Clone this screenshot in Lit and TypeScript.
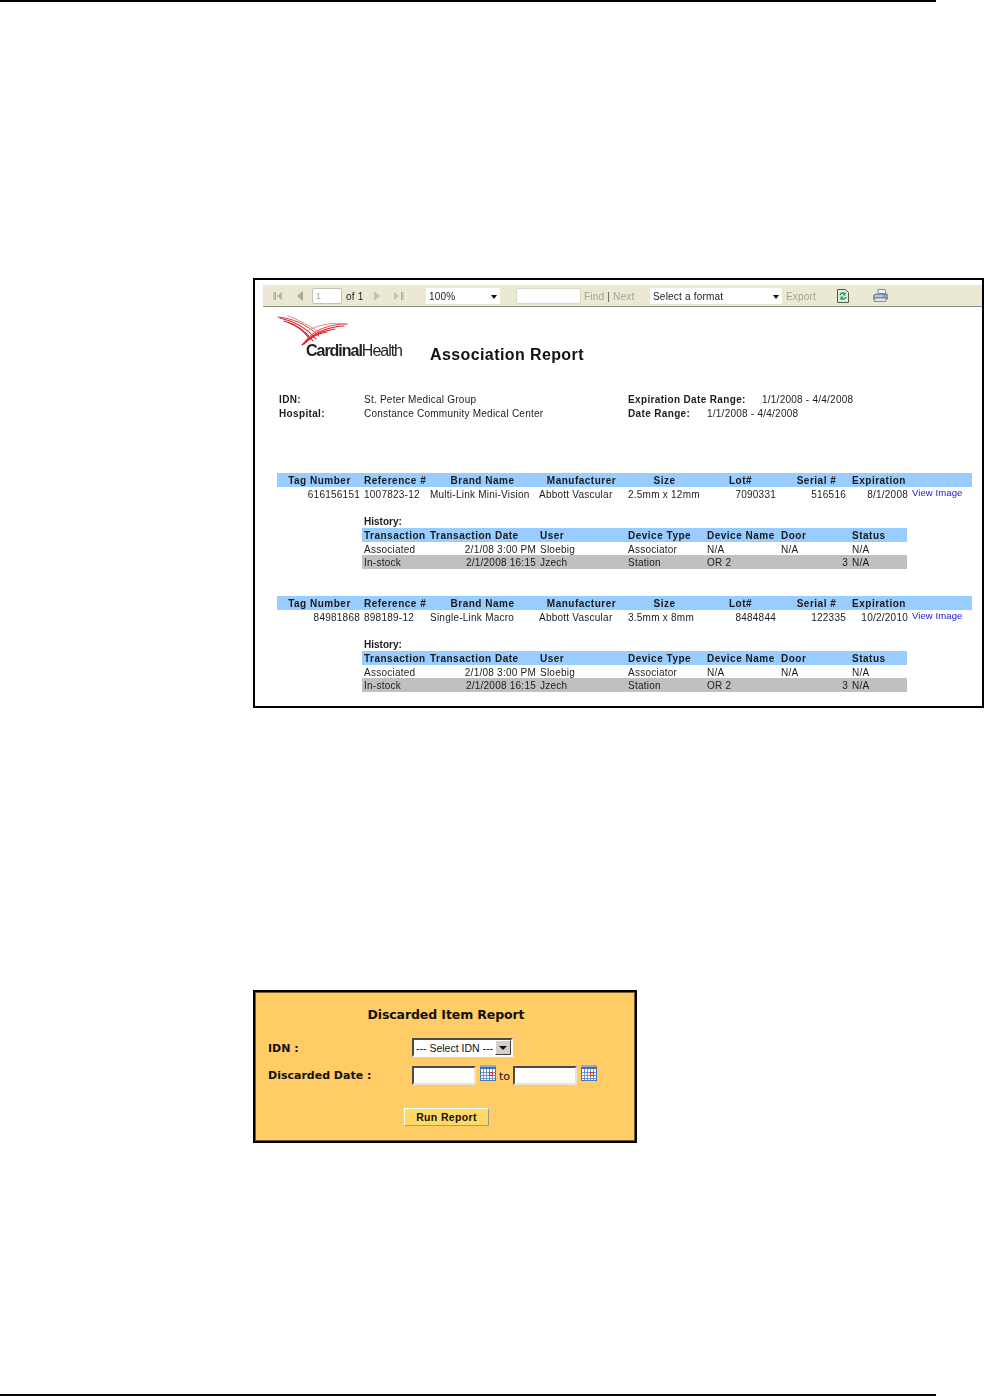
import { LitElement, html, css, svg } from "lit";
import { customElement } from "lit/decorators.js";

const mainHead = ["Tag Number", "Reference #", "Brand Name", "Manufacturer", "Size", "Lot#", "Serial #", "Expiration", ""];
const histHead = ["Transaction", "Transaction Date", "User", "Device Type", "Device Name", "Door", "Status"];

const records = [
  { main: ["616156151", "1007823-12", "Multi-Link Mini-Vision", "Abbott Vascular", "2.5mm x 12mm", "7090331", "516516", "8/1/2008"] },
  { main: ["84981868", "898189-12", "Single-Link Macro", "Abbott Vascular", "3.5mm x 8mm", "8484844", "122335", "10/2/2010"] },
];

const calendar = svg`<svg class="cal" viewBox="0 0 16 16" width="16" height="16">
  <rect x="0.5" y="0.5" width="15" height="15" fill="#fff" stroke="#3f6fb5"/>
  <rect x="0" y="0" width="16" height="4" fill="#3f6fb5"/>
  <path d="M1 0v2M3 0v2M5 0v2M7 0v2M9 0v2M11 0v2M13 0v2M15 0v2" stroke="#dfe8f5" stroke-width="1"/>
  <path d="M0.5 7.5h15M0.5 10.5h15M0.5 13.5h15M3.5 4v12M6.5 4v12M9.5 4v12M12.5 4v12" stroke="#6d94cf" stroke-width="1"/>
  <rect x="9.5" y="7.5" width="3" height="3" fill="#fff" stroke="#e8231a"/>
</svg>`;

@customElement("app-root")
export class AppRoot extends LitElement {
  static styles = css`
    :host { display: block; background: #fff; font-family: "Liberation Sans", Arial, sans-serif; color: #1c1c1c; }
    .page { height: 1396px; display: flex; flex-direction: column; overflow: hidden; }
    .rule { width: 936px; height: 2px; background: #000; flex: none; }
    .spacer { flex: 1; }

    .frame { margin: 276px 0 0 253px; width: 731px; height: 430px; box-sizing: border-box; border: 2px solid #000; padding-top: 5px; flex: none; overflow: hidden; }
    .toolbar { margin-left: 8px; height: 22px; box-sizing: border-box; background: #ebe9d4; border-bottom: 1px solid #8f8f80; display: flex; align-items: center; font-size: 10px; letter-spacing: .2px; color: #a3a394; line-height: 16px; filter: blur(.3px); }
    .toolbar svg { display: block; flex: none; }
    .nav1 { margin-left: 10px; }
    .nav2 { margin-left: 14px; }
    .pageno { margin-left: 9px; width: 30px; height: 16px; box-sizing: border-box; background: #fff; border: 1px solid #c4c4b4; border-radius: 2px; padding-left: 3px; line-height: 15px; color: #a8a8a8; font-size: 9px; }
    .of { margin-left: 4px; color: #222; width: 19px; white-space: nowrap; padding-top: 2px; }
    .nav3 { margin-left: 9px; }
    .nav4 { margin-left: 14px; }
    .zoomsel { margin-left: 22px; width: 74px; height: 16px; background: #fff; color: #222; box-sizing: border-box; padding: 2px 3px 0; display: flex; align-items: center; justify-content: space-between; }
    .findbox { margin-left: 16px; width: 65px; height: 16px; background: #fff; border: 1px solid #d8d8c8; box-sizing: border-box; border-radius: 2px; }
    .find { margin-left: 3px; width: 50px; flex: none; white-space: nowrap; padding-top: 2px; }
    .sep { margin: 0 3px; color: #555; }
    .fmtsel { margin-left: 16px; width: 132px; height: 16px; background: #fff; color: #222; box-sizing: border-box; padding: 2px 3px 0; display: flex; align-items: center; justify-content: space-between; }
    .export { margin-left: 4px; width: 30px; white-space: nowrap; padding-top: 2px; }
    .refresh { margin-left: 21px; }
    .print { margin-left: 24px; }
    .tri { width: 0; height: 0; border-left: 3px solid transparent; border-right: 3px solid transparent; border-top: 4px solid #111; }

    .body { padding-left: 22px; font-size: 10px; letter-spacing: .24px; line-height: 14px; filter: blur(.3px); }
    .brandrow { height: 85px; display: flex; align-items: flex-start; }
    .logo { width: 153px; padding-top: 8px; flex: none; }
    .logo svg { display: block; }
    .wordmark { font-size: 16px; line-height: 14px; letter-spacing: -1.02px; color: #222; margin: -3px 0 0 29px; white-space: nowrap; }
    .wordmark b { font-weight: bold; }
    .title { font-size: 16px; font-weight: bold; letter-spacing: .4px; color: #111; margin-top: 39px; line-height: 18px; white-space: nowrap; }

    .meta { display: grid; grid-template-columns: 85px 264px 1fr; grid-auto-rows: 14px; align-content: start; padding: 1px 0 0 2px; height: 81px; box-sizing: border-box; }
    .meta b { letter-spacing: .35px; }
    .meta .pair { display: flex; }
    .lab1 { width: 134px; flex: none; }
    .lab2 { width: 79px; flex: none; }

    .record { height: 123px; }
    .cols { display: grid; height: 14px; line-height: 14px; white-space: nowrap; }
    .main { grid-template-columns: 85px 66px 109px 89px 77px 75px 70px 62px 62px; width: 695px; }
    .hist { grid-template-columns: 66px 110px 88px 79px 74px 71px 57px; width: 545px; margin-left: 85px; }
    .cols > div { padding: 1px 2px 0; box-sizing: border-box; overflow: visible; }
    .headrow { background: #99ccff; font-weight: bold; color: #1a1a1a; letter-spacing: .5px; }
    .main.headrow > div { text-align: center; }
    .main.headrow > div:nth-child(7) { padding-left: 9px; }
    .r { text-align: right; }
    .cols > .view { color: #1414e0; font-size: 9.5px; letter-spacing: .1px; position: relative; top: -2px; padding-left: 2px; }
    .historylabel { margin: 14px 0 0 87px; height: 13px; line-height: 13px; font-weight: bold; letter-spacing: 0; }
    .h13 { height: 13px; line-height: 13px; }
    .grey { background: #c0c0c0; height: 14px; line-height: 13px; }

    .form { margin: 282px 0 0 253px; width: 384px; height: 153px; box-sizing: border-box; border: 2px solid #000; box-shadow: inset 0 0 0 1px rgba(0, 0, 0, .55); background: #ffcc66; flex: none; font-family: "DejaVu Sans", Verdana, sans-serif; color: #111; }
    .ftitle { margin-top: 15px; height: 16px; line-height: 16px; text-align: center; font-size: 12.5px; font-weight: bold; letter-spacing: -.1px; padding-left: 2px; }
    .frow { display: flex; align-items: center; margin-left: 13px; }
    .flabel { width: 144px; font-size: 11px; font-weight: bold; letter-spacing: 0; white-space: nowrap; flex: none; padding-top: 1px; }
    .r1 { margin-top: 15px; height: 19px; }
    .r2 { margin-top: 8px; height: 20px; }
    .sel { width: 101px; height: 19px; box-sizing: border-box; background: #fff; border: 2px solid; border-color: #4a4a4a #fff #fff #4a4a4a; display: flex; align-items: center; justify-content: space-between; font: 10.5px "Liberation Sans", Arial, sans-serif; letter-spacing: 0; padding: 0 0 0 2px; white-space: nowrap; color: #111; }
    .selbtn { width: 16px; height: 15px; background: #d4d0c8; border: 1px solid; border-color: #fff #404040 #404040 #fff; box-sizing: border-box; display: flex; align-items: center; justify-content: center; flex: none; }
    .selbtn .tri { border-left-width: 4px; border-right-width: 4px; border-top-width: 4px; }
    .inp { width: 64px; height: 19px; box-sizing: border-box; background: #fff; border: 2px solid; border-color: #4a4a4a #e8e4dc #e8e4dc #4a4a4a; flex: none; }
    .cal { margin-left: 4px; margin-top: -5px; flex: none; display: block; }
    .to { font: 11px "DejaVu Sans", Verdana, sans-serif; width: 11px; margin: 3px 3px 0 3px; flex: none; }
    .btnrow { margin: 23px 0 0 149px; }
    .btn { width: 85px; height: 18px; box-sizing: border-box; background: #ffd966; border: 1px solid; border-color: #fff #999 #999 #fff; font: bold 10.5px "Liberation Sans", Arial, sans-serif; letter-spacing: .35px; text-align: center; line-height: 16px; color: #111; }
  `;

  private logo() {
    return svg`<svg viewBox="0 0 72 32" width="72" height="32" fill="none" stroke="#d8202a" stroke-linecap="round">
      <path d="M1 2C14 3 30 9 42 21" stroke-width="1" stroke="#d8444c"/>
      <path d="M3 3C16 6 30 13 39 24" stroke-width="1.1"/>
      <path d="M7 6C18 9 28 15 36 26" stroke-width="1.1"/>
      <path d="M12 8C21 11 28 17 33 25" stroke-width="1.1"/>
      <path d="M11 1C20 4 35 12 45 19" stroke-width="1" stroke="#e58a8e"/>
      <path d="M70 9C52 9 35 15 27 28" stroke-width="1" stroke="#d8444c"/>
      <path d="M67 11C50 12 36 18 26 29" stroke-width="1.1"/>
      <path d="M58 14C44 16 34 21 25 30" stroke-width="1.1"/>
      <path d="M50 17C41 18 33 23 27 29" stroke-width="1.1"/>
      <path d="M70 9C58 7 44 9 32 15" stroke-width="1" stroke="#e58a8e"/>
    </svg>`;
  }

  private first() {
    return svg`<svg class="nav1" viewBox="0 0 10 10" width="10" height="10"><path d="M1 1v8M2.5 1v8" stroke="#a9a99a"/><path d="M9 1v8L4 5z" fill="#b4b4a5"/></svg>`;
  }
  private prev() {
    return svg`<svg class="nav2" viewBox="0 0 6 10" width="6" height="10"><path d="M6 0v10L0 5z" fill="#a9a99a"/></svg>`;
  }
  private next() {
    return svg`<svg class="nav3" viewBox="0 0 6 10" width="6" height="10"><path d="M0 0v10l6-5z" fill="#c4c4b5"/></svg>`;
  }
  private last() {
    return svg`<svg class="nav4" viewBox="0 0 10 10" width="10" height="10"><path d="M0 1v8l5-4z" fill="#c4c4b5"/><path d="M7.5 1v8M9 1v8" stroke="#a9a99a"/></svg>`;
  }
  private refresh() {
    return svg`<svg class="refresh" viewBox="0 0 12 14" width="12" height="14">
      <path d="M.5.5h8l3 3v10H.5z" fill="#e4ebe6" stroke="#4e5c54"/>
      <path d="M3 6a3 3 0 0 1 5-1M9 8a3 3 0 0 1-5 1" fill="none" stroke="#1fa34a" stroke-width="1.6"/>
      <path d="M8.5 2.5v4h-3zM3.5 11.5v-4h3z" fill="#1fa34a"/>
    </svg>`;
  }
  private printer() {
    return svg`<svg class="print" viewBox="0 0 15 13" width="15" height="13">
      <path d="M5 .5h7l1 4H5z" fill="#f4f6f9" stroke="#7c8a9c"/>
      <path d="M2 5h12l1 1v4H0V7z" fill="#8d9fb6" stroke="#5e6c80" stroke-width=".6"/>
      <path d="M2 9h11v3.5H1z" fill="#dfe5ec" stroke="#5e6c80" stroke-width=".7"/>
      <path d="M2 7h8" stroke="#e6ebf2"/>
    </svg>`;
  }

  private record(r: { main: string[] }) {
    const m = r.main;
    return html`<div class="record">
      <div class="cols main headrow">${mainHead.map((h) => html`<div>${h}</div>`)}</div>
      <div class="cols main">
        <div class="r">${m[0]}</div><div>${m[1]}</div><div>${m[2]}</div><div>${m[3]}</div><div>${m[4]}</div>
        <div class="r">${m[5]}</div><div class="r">${m[6]}</div><div class="r">${m[7]}</div>
        <div class="view">View Image</div>
      </div>
      <div class="historylabel">History:</div>
      <div class="cols hist headrow">${histHead.map((h) => html`<div>${h}</div>`)}</div>
      <div class="cols hist h13">
        <div>Associated</div><div class="r">2/1/08 3:00 PM</div><div>Sloebig</div><div>Associator</div><div>N/A</div><div>N/A</div><div>N/A</div>
      </div>
      <div class="cols hist grey">
        <div>In-stock</div><div class="r">2/1/2008 16:15</div><div>Jzech</div><div>Station</div><div>OR 2</div><div class="r">3</div><div>N/A</div>
      </div>
    </div>`;
  }

  render() {
    return html`<div class="page">
      <div class="rule"></div>
      <section class="frame">
        <div class="toolbar">
          ${this.first()}${this.prev()}
          <div class="pageno">1</div>
          <div class="of">of 1</div>
          ${this.next()}${this.last()}
          <div class="zoomsel"><span>100%</span><span class="tri"></span></div>
          <div class="findbox"></div>
          <div class="find">Find<span class="sep">|</span>Next</div>
          <div class="fmtsel"><span>Select a format</span><span class="tri"></span></div>
          <div class="export">Export</div>
          ${this.refresh()}${this.printer()}
        </div>
        <div class="body">
          <div class="brandrow">
            <div class="logo">
              ${this.logo()}
              <div class="wordmark"><b>Cardinal</b>Health</div>
            </div>
            <div class="title">Association Report</div>
          </div>
          <div class="meta">
            <b>IDN:</b><span>St. Peter Medical Group</span>
            <div class="pair"><b class="lab1">Expiration Date Range:</b><span>1/1/2008 - 4/4/2008</span></div>
            <b>Hospital:</b><span>Constance Community Medical Center</span>
            <div class="pair"><b class="lab2">Date Range:</b><span>1/1/2008 - 4/4/2008</span></div>
          </div>
          ${records.map((r) => this.record(r))}
        </div>
      </section>
      <section class="form">
        <div class="ftitle">Discarded Item Report</div>
        <div class="frow r1">
          <div class="flabel">IDN :</div>
          <div class="sel"><span>--- Select IDN ---</span><span class="selbtn"><span class="tri"></span></span></div>
        </div>
        <div class="frow r2">
          <div class="flabel">Discarded Date :</div>
          <div class="inp"></div>${calendar}
          <span class="to">to</span>
          <div class="inp"></div>${calendar}
        </div>
        <div class="btnrow"><div class="btn">Run Report</div></div>
      </section>
      <div class="spacer"></div>
      <div class="rule"></div>
    </div>`;
  }
}
